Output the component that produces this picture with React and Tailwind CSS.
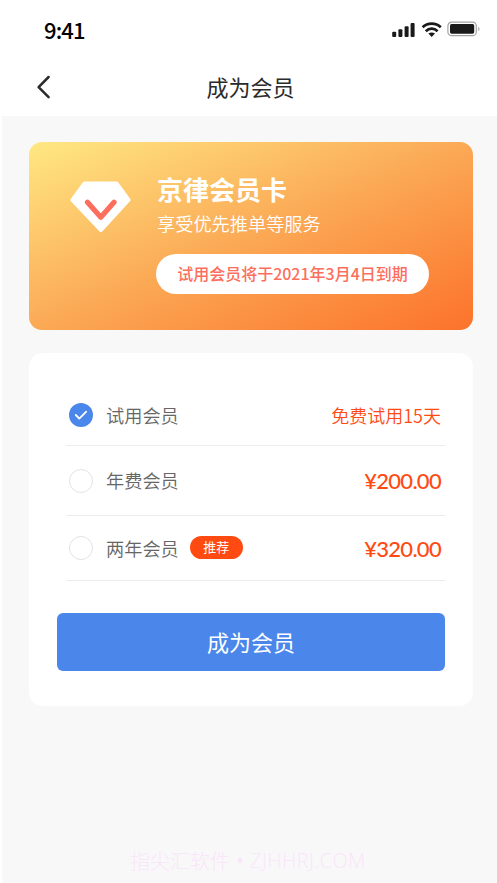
import { useState } from 'react'

const plans = [
  { id: 'trial', name: '试用会员', price: '免费试用15天', row: 'h-[61px]' },
  { id: 'year', name: '年费会员', price: '¥200.00', row: 'h-[70px]' },
  { id: 'two-year', name: '两年会员', price: '¥320.00', tag: '推荐', row: 'h-[65px]' },
]

function StatusBar() {
  return (
    <div className="flex h-[60px] items-center justify-between pl-[44px] pr-[16px] text-black">
      <span className="pb-[2px] text-[22px] leading-none font-medium tracking-[-0.9px]">9:41</span>
      <div className="flex items-center">
        <svg width="24" height="16" viewBox="0 0 24 16" fill="#1a1a1a">
          <rect x="0.2" y="9.8" width="4" height="5.2" rx="1" />
          <rect x="6.4" y="7.2" width="4" height="7.8" rx="1" />
          <rect x="12.6" y="4.2" width="4" height="10.8" rx="1" />
          <rect x="18.6" y="1" width="4" height="14" rx="1" />
        </svg>
        <svg className="ml-[5px]" width="22" height="16" viewBox="0 0 22 16" fill="none" stroke="#1a1a1a" strokeWidth="2.7">
          <path d="M1.6 5.2C6.7 0.4 14.7 0.4 19.8 5.2" />
          <path d="M4.8 9.2C8.2 5.8 13.2 5.8 16.6 9.2" />
          <path d="M7.4 11.6C9.4 10 12 10 14 11.6L10.7 15Z" fill="#1a1a1a" stroke="none" />
        </svg>
        <svg className="ml-[4px] -mt-[1.5px]" width="34" height="16" viewBox="0 0 34 16">
          <rect x="0.9" y="1.1" width="28.4" height="13.6" rx="3.8" fill="none" stroke="#a3a3a3" strokeWidth="1.2" />
          <rect x="3" y="3.1" width="24.2" height="9.6" rx="1.6" fill="#1a1a1a" />
          <path d="M31.2 6C33 6.8 33 9.2 31.2 10Z" fill="#a3a3a3" />
        </svg>
      </div>
    </div>
  )
}

function NavBar() {
  return (
    <div className="grid h-[56px] grid-cols-[60px_1fr_56px] items-center pb-[3px]">
      <button className="pl-[35px]" aria-label="返回">
        <svg width="16" height="24" viewBox="0 0 16 24" fill="none" stroke="#2b2b2b" strokeWidth="2.5" strokeLinecap="round" strokeLinejoin="round">
          <path d="M13.6 2L3.6 12.2L13.6 22.2" />
        </svg>
      </button>
      <h1 className="pb-[2px] text-center text-[22px] leading-none font-normal text-[#2b2b2b]">成为会员</h1>
    </div>
  )
}

function MemberCard() {
  return (
    <section className="flex h-[188px] rounded-[13px] bg-[linear-gradient(157deg,#ffe883_0%,#fba955_50%,#fc722b_100%)] pl-[41px] text-white">
      <svg className="mt-[38px] shrink-0" width="62" height="54" viewBox="0 0 62 54">
        <path d="M14.5 3.5H46.5L58.5 20L31 50L2.5 20Z" fill="#fff" stroke="#fff" strokeWidth="4" strokeLinejoin="round" />
        <path d="M17.5 22.2L30.8 37.2L44 22.2" fill="none" stroke="#fd6e5d" strokeWidth="5.2" strokeLinecap="round" strokeLinejoin="round" />
      </svg>
      <div className="ml-[25px] pt-[32px]">
        <h2 className="text-[26px] leading-[30px] font-bold">京律会员卡</h2>
        <p className="mt-[7px] text-[18.2px] leading-[24px] font-[350]">享受优先推单等服务</p>
        <div className="mt-[19px] -ml-px flex h-[40px] w-[273px] items-center justify-center rounded-full bg-white pb-[2px] text-[16px] leading-none font-medium text-[#fd6e5d]">
          试用会员将于2021年3月4日到期
        </div>
      </div>
    </section>
  )
}

function Radio({ checked }) {
  if (!checked) {
    return <span className="size-6 rounded-full border-[1.5px] border-[#e3e3e3]" />
  }
  return (
    <span className="flex size-6 items-center justify-center rounded-full bg-[#4b87ea]">
      <svg width="14" height="12" viewBox="0 0 14 12" fill="none" stroke="#fff" strokeWidth="1.8" strokeLinecap="round" strokeLinejoin="round">
        <path d="M1.8 6L5.3 9.6L12.2 2.6" />
      </svg>
    </span>
  )
}

function PlanRow({ plan, checked, onSelect }) {
  return (
    <li className={`${plan.row} border-b border-[#ececec]`}>
      <button onClick={onSelect} className="flex h-full w-full items-center pl-[3px] pr-[4px]">
        <Radio checked={checked} />
        <span className="ml-[13px] text-[18.2px] leading-none font-[350] text-[#666]">{plan.name}</span>
        {plan.tag && (
          <span className="ml-[11px] mb-[2px] flex h-[23px] w-[53px] items-center justify-center rounded-full bg-[#ff4a12] pb-[2px] text-[13px] leading-none text-white">
            {plan.tag}
          </span>
        )}
        <span
          className={
            plan.id === 'trial'
              ? 'ml-auto text-[18px] leading-none font-[350] text-[#ff4a12]'
              : "ml-auto pt-px text-[22px] leading-none font-medium tracking-[-0.7px] text-[#ff4a12] font-[Lato,'Noto_Sans_CJK_SC',sans-serif]"
          }
        >
          {plan.price}
        </span>
      </button>
    </li>
  )
}

export default function App() {
  const [selected, setSelected] = useState('trial')

  return (
    <div className="flex h-[883px] w-[497px] flex-col overflow-hidden bg-white font-['Noto_Sans_CJK_SC',sans-serif]">
      <StatusBar />
      <NavBar />
      <main className="ml-[2px] flex flex-1 flex-col bg-[#f8f8f8] pt-[26px] pr-[24px] pl-[27px]">
        <MemberCard />
        <section className="mt-[23px] h-[353px] rounded-[14px] bg-white px-[28px] pt-[32px]">
          <ul className="ml-[9px]">
            {plans.map((plan) => (
              <PlanRow
                key={plan.id}
                plan={plan}
                checked={selected === plan.id}
                onSelect={() => setSelected(plan.id)}
              />
            ))}
          </ul>
          <button className="mt-[32px] flex h-[58px] w-full items-center justify-center rounded-[6px] bg-[#4b87ea] pb-[2px] text-[22px] leading-none text-white">
            成为会员
          </button>
        </section>
        <footer className="mt-auto mb-[12px] flex items-center pl-[101px] text-[20px] leading-[20px] font-light text-[#fae6fa]">
          <span>指尖汇软件</span>
          <span className="w-[20px] text-center font-['DejaVu_Sans']">•</span>
          <span className="font-['Open_Sans'] tracking-[0.4px]">ZJHHRJ.COM</span>
        </footer>
      </main>
    </div>
  )
}
